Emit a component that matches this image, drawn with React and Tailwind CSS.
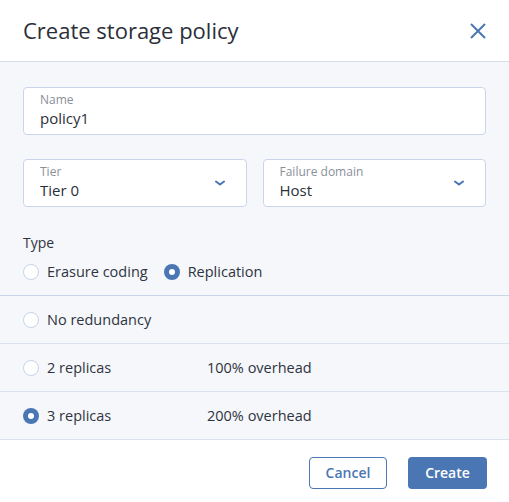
import React, { useState } from "react";

const Radio = ({ checked }) => (
  <span
    className={`flex h-4 w-4 shrink-0 items-center justify-center rounded-full ${
      checked ? "bg-[#4a76b4]" : "border border-[#c5d4e8] bg-white"
    }`}
  >
    {checked && <span className="h-[6px] w-[6px] rounded-full bg-white" />}
  </span>
);

const Chevron = () => (
  <svg width="12" height="8" viewBox="0 0 12 8" className="text-[#4a76b4]">
    <path d="M2 2.5 L6 5.5 L10 2.5" fill="none" stroke="currentColor" strokeWidth="2" strokeLinecap="round" />
  </svg>
);

const Field = ({ label, value, select }) => (
  <div className="flex h-12 flex-1 items-center justify-between rounded-[4px] border border-[#c9d6ea] bg-white pl-4 pr-5">
    <div className="flex flex-col pb-[3px]">
      <span className="text-[12px] leading-4 text-[#8a8f99]">{label}</span>
      <span className="text-[15px] leading-5 text-[#2b2f38]">{value}</span>
    </div>
    {select && <Chevron />}
  </div>
);

const App = () => {
  const [replicas, setReplicas] = useState(3);
  const rows = [
    { n: 1, label: "No redundancy", overhead: "" },
    { n: 2, label: "2 replicas", overhead: "100% overhead" },
    { n: 3, label: "3 replicas", overhead: "200% overhead" },
  ];

  return (
    <div
      className="flex h-[502px] w-[509px] flex-col bg-white text-[#2f3440]"
      style={{ fontFamily: '"Open Sans", "Noto Sans", sans-serif' }}
    >
      <div className="flex h-[62px] items-center justify-between border-b border-[#d5dfec] pl-[23px] pr-[22px]">
        <h1 className="text-[22px] text-[#2b2f38]">Create storage policy</h1>
        <svg width="18" height="18" viewBox="0 0 18 18" className="text-[#4a76b4]">
          <path d="M2 2 L16 16 M16 2 L2 16" stroke="currentColor" strokeWidth="2" />
        </svg>
      </div>

      <div className="flex flex-col bg-[#f5f7fb] pt-[25px]">
        <div className="px-[23px]">
          <Field label="Name" value="policy1" />
          <div className="mt-6 flex gap-4">
            <Field label="Tier" value="Tier 0" select />
            <Field label="Failure domain" value="Host" select />
          </div>
          <div className="mt-[26px] text-[14px] leading-5">Type</div>
          <div className="mt-2 flex items-center gap-2 pb-[12px] text-[14.5px]">
            <Radio />
            <span className="mr-2">Erasure coding</span>
            <Radio checked />
            <span>Replication</span>
          </div>
        </div>
        <div className="border-t border-[#c9d6ea]">
          {rows.map((r) => (
            <div
              key={r.n}
              onClick={() => setReplicas(r.n)}
              className="flex h-12 cursor-pointer items-center border-b border-[#dbe3ef] px-[23px] pt-[2px] text-[14.5px]"
            >
              <Radio checked={replicas === r.n} />
              <span className="ml-2 w-[160px]">{r.label}</span>
              <span>{r.overhead}</span>
            </div>
          ))}
        </div>
      </div>

      <div className="flex flex-1 items-start justify-end gap-[21px] pr-[22px] pt-[17px]">
        <button className="h-8 w-[78px] rounded-[4px] border border-[#4a76b4] bg-white text-[14px] font-semibold text-[#4a76b4]">
          Cancel
        </button>
        <button className="h-8 w-[79px] rounded-[4px] bg-[#4a76b4] text-[14px] font-semibold text-white">
          Create
        </button>
      </div>
    </div>
  );
};

export default App;
